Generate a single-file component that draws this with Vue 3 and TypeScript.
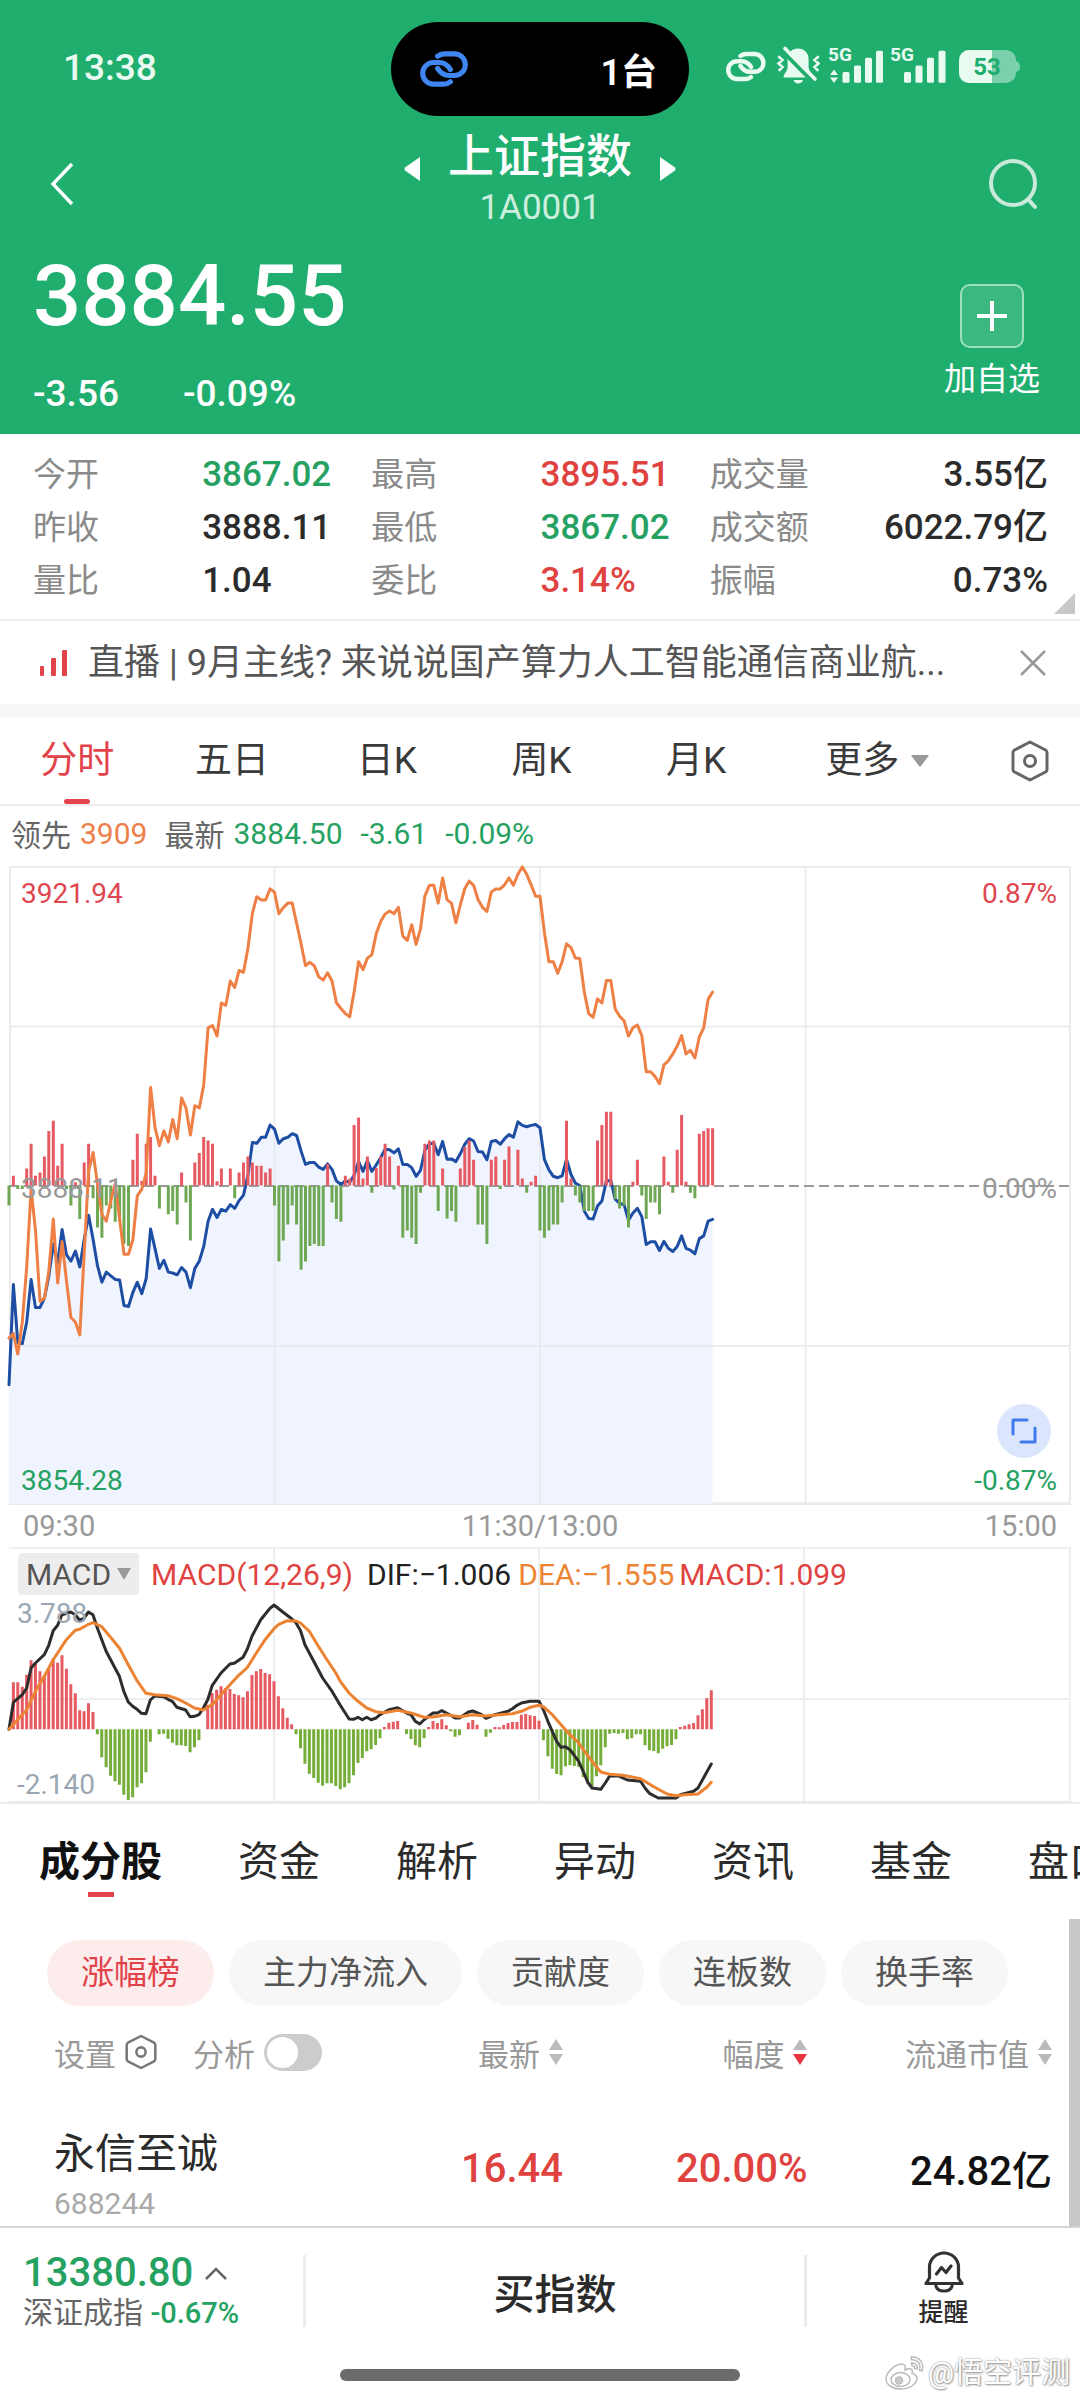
<script setup lang="ts">
import { computed, ref } from 'vue'

type Tone = 'up' | 'down' | 'flat'
interface Stat { label: string; value: string; tone: Tone }
type Point = [number, number]

const stats: Stat[] = [
  { label: '今开', value: '3867.02', tone: 'down' },
  { label: '最高', value: '3895.51', tone: 'up' },
  { label: '成交量', value: '3.55亿', tone: 'flat' },
  { label: '昨收', value: '3888.11', tone: 'flat' },
  { label: '最低', value: '3867.02', tone: 'down' },
  { label: '成交额', value: '6022.79亿', tone: 'flat' },
  { label: '量比', value: '1.04', tone: 'flat' },
  { label: '委比', value: '3.14%', tone: 'up' },
  { label: '振幅', value: '0.73%', tone: 'flat' },
]

const periods = ['分时', '五日', '日K', '周K', '月K']
const period = ref('分时')
const sections = ['成分股', '资金', '解析', '异动', '资讯', '基金', '盘口']
const section = ref('成分股')
const rankings = ['涨幅榜', '主力净流入', '贡献度', '连板数', '换手率']
const ranking = ref('涨幅榜')
const analysis = ref(false)
const columns = [
  { label: '最新', sorted: false },
  { label: '幅度', sorted: true },
  { label: '流通市值', sorted: false },
]
const stocks = [{ name: '永信至诚', code: '688244', last: '16.44', change: '20.00%', cap: '24.82亿' }]

/* One sample per minute, 240 minutes in a session. */
const STEP = 1062 / 240
const px = (i: number) => i * STEP

/* Intraday panel: levels run from 165 (top) to 1557 (bottom), flat at 862. */
const leading = [
  1195, 1185, 1230, 1160, 1040, 870, 960, 1115, 1108, 1050, 935, 1075, 985, 1070, 1150, 1160, 1188, 1010, 830, 790,
  860, 925, 940, 895, 858, 935, 1012, 1012, 980, 885, 870, 835, 648, 735, 775, 743, 767, 718, 760, 671,
  693, 752, 688, 693, 643, 518, 513, 536, 464, 469, 416, 430, 393, 397, 345, 268, 232, 239, 239, 215,
  222, 269, 256, 246, 246, 290, 335, 382, 375, 383, 407, 414, 398, 416, 463, 476, 487, 494, 440, 374,
  391, 366, 359, 312, 286, 270, 263, 269, 255, 318, 327, 293, 336, 302, 230, 207, 207, 246, 191, 239,
  246, 289, 250, 214, 198, 207, 238, 255, 264, 222, 215, 215, 206, 191, 207, 183, 167, 183, 206, 231,
  231, 310, 374, 374, 399, 374, 335, 343, 366, 367, 440, 487, 495, 455, 464, 415, 415, 477, 493, 503,
  536, 518, 512, 535, 614, 614, 624, 640, 599, 590, 575, 558, 535, 575, 567, 584, 538, 518, 456, 440,
]
const latest = [
  1297, 1078, 1205, 1207, 1160, 1067, 1128, 1128, 1108, 1060, 990, 1030, 958, 1013, 1027, 1005, 1040, 980, 927, 980,
  1037, 1073, 1051, 1059, 1067, 1068, 1124, 1126, 1095, 1073, 1098, 1065, 957, 1000, 1043, 1025, 1051, 1053, 1057, 1041,
  1051, 1085, 1043, 1027, 995, 940, 914, 932, 914, 918, 904, 912, 895, 883, 840, 768, 770, 757, 757, 730,
  739, 770, 760, 757, 749, 753, 787, 816, 812, 812, 822, 827, 815, 827, 852, 860, 852, 855, 840, 810,
  831, 808, 831, 817, 801, 783, 784, 791, 782, 816, 816, 823, 842, 829, 785, 771, 770, 795, 766, 805,
  804, 810, 793, 772, 760, 765, 788, 789, 806, 766, 764, 772, 760, 751, 757, 723, 731, 734, 731, 729,
  736, 805, 828, 842, 845, 841, 805, 838, 857, 862, 918, 934, 935, 907, 896, 852, 851, 892, 901, 904,
  938, 922, 912, 930, 991, 985, 985, 1004, 984, 999, 1006, 995, 972, 999, 1003, 1011, 978, 972, 940, 936,
]
const flow = [
  906, 841, 870, 870, 825, 771, 841, 834, 799, 743, 721, 819, 771, 870, 906, 855, 935, 812, 771, 890,
  954, 976, 906, 912, 941, 940, 990, 994, 806, 749, 852, 771, 756, 841, 912, 862, 925, 918, 947, 834,
  899, 982, 812, 791, 756, 764, 771, 853, 825, 862, 825, 890, 834, 812, 799, 812, 819, 819, 834, 825,
  906, 1028, 982, 947, 906, 947, 1046, 1028, 994, 990, 994, 994, 815, 899, 935, 941, 841, 847, 730, 714,
  847, 799, 878, 824, 799, 771, 799, 871, 819, 976, 960, 976, 990, 878, 771, 764, 764, 918, 825, 934,
  918, 941, 825, 778, 764, 806, 947, 947, 990, 806, 799, 870, 806, 777, 862, 784, 847, 878, 854, 841,
  960, 976, 960, 947, 947, 899, 721, 847, 884, 899, 918, 918, 918, 764, 730, 701, 701, 892, 912, 906,
  954, 854, 806, 884, 935, 899, 899, 925, 799, 854, 878, 784, 708, 854, 878, 890, 749, 743, 737, 737,
]
const py = (v: number) => ((v - 165) / 1392) * 638
const toPath = (pts: Point[]) => 'M' + pts.map(([x, y]) => `${x.toFixed(1)} ${y.toFixed(1)}`).join('L')

const leadingPath = toPath(leading.map((v, i): Point => [px(i), py(v)]))
const latestPath = toPath(latest.map((v, i): Point => [px(i), py(v)]))
const latestArea = `${latestPath}L${px(159)} 638L0 638Z`

const bars = (values: number[], zero: number, map: (v: number) => number, up: boolean) =>
  values
    .map((v, i) => (v !== zero && v < zero === up ? `M${px(i).toFixed(1)} ${map(zero).toFixed(1)}V${map(v).toFixed(1)}` : ''))
    .join('')
const flowUp = bars(flow, 862, py, true)
const flowDown = bars(flow, 862, py, false)

/* MACD panel: levels run from 143 (top) to 898 (bottom), zero at 684. */
const histogram = [
  684, 543, 543, 556, 520, 477, 487, 510, 521, 500, 471, 484, 462, 502, 549, 576, 627, 630, 606, 632,
  699, 768, 798, 823, 840, 850, 880, 896, 888, 858, 846, 813, 721, 684, 699, 697, 712, 724, 732, 732,
  734, 753, 738, 717, 684, 610, 575, 565, 555, 560, 563, 578, 582, 588, 570, 521, 510, 503, 515, 519,
  540, 585, 621, 649, 669, 699, 741, 787, 817, 830, 844, 853, 846, 846, 854, 864, 858, 846, 822, 785,
  770, 750, 744, 731, 711, 677, 664, 661, 659, 684, 698, 713, 732, 738, 711, 677, 659, 665, 654, 672,
  690, 706, 702, 684, 664, 656, 670, 684, 706, 694, 677, 678, 671, 665, 662, 662, 640, 638, 642, 644,
  658, 717, 765, 802, 818, 822, 795, 792, 794, 797, 828, 840, 855, 825, 792, 738, 697, 695, 697, 695,
  714, 711, 699, 699, 732, 747, 749, 756, 742, 735, 731, 714, 677, 673, 669, 665, 642, 624, 591, 567,
]
const dif: Point[] = [
  [0, 684], [1, 603], [3, 580], [4, 560], [5, 500], [6, 485], [8, 460], [9, 432], [10, 388], [11, 372], [12, 340],
  [14, 332], [15, 340], [16, 357], [17, 350], [18, 332], [19, 340], [20, 380], [22, 450], [24, 500], [25, 525],
  [26, 570], [27, 602], [28, 615], [29, 624], [30, 636], [31, 637], [32, 596], [33, 584], [35, 586], [36, 594],
  [37, 600], [38, 618], [40, 626], [41, 646], [42, 645], [43, 640], [44, 620], [45, 595], [46, 553], [48, 515],
  [50, 488], [51, 486], [53, 468], [54, 442], [55, 405], [57, 355], [59, 322], [60, 311], [62, 332], [64, 352],
  [65, 365], [66, 388], [67, 430], [69, 480], [71, 530], [73, 567], [75, 612], [77, 653], [78, 654], [79, 648],
  [80, 655], [81, 648], [82, 655], [83, 651], [84, 640], [86, 625], [88, 619], [90, 635], [91, 640], [92, 660],
  [93, 668], [94, 655], [96, 635], [97, 635], [98, 628], [100, 642], [101, 650], [102, 650], [104, 632], [105, 629],
  [107, 640], [108, 651], [110, 640], [113, 630], [114, 622], [115, 612], [116, 605], [118, 600], [120, 600],
  [121, 625], [122, 660], [123, 690], [124, 720], [125, 738], [126, 736], [127, 745], [129, 780], [130, 810],
  [131, 842], [132, 860], [134, 864], [135, 845], [136, 824], [138, 824], [140, 836], [143, 840], [144, 860],
  [145, 876], [147, 890], [151, 890], [152, 880], [155, 870], [156, 860], [158, 812], [159, 788],
]
const dea: Point[] = [
  [0, 684], [2, 655], [4, 625], [6, 570], [8, 525], [10, 475], [12, 435], [13, 415], [15, 387], [16, 384], [18, 369],
  [19, 364], [21, 376], [23, 408], [25, 440], [27, 490], [29, 538], [31, 576], [33, 580], [36, 583], [38, 592],
  [40, 605], [42, 620], [44, 626], [46, 610], [48, 580], [50, 550], [52, 522], [54, 498], [56, 455], [58, 415],
  [60, 382], [61, 370], [63, 358], [65, 359], [66, 365], [68, 390], [70, 434], [72, 475], [74, 515], [75, 540],
  [77, 575], [79, 600], [81, 620], [83, 631], [85, 634], [88, 627], [91, 635], [94, 648], [96, 647], [99, 640],
  [102, 646], [105, 640], [108, 644], [111, 640], [114, 637], [116, 630], [118, 618], [120, 612], [121, 616],
  [123, 640], [125, 670], [127, 700], [129, 725], [130, 745], [132, 780], [134, 812], [136, 819], [139, 822],
  [143, 832], [146, 856], [149, 878], [151, 883], [153, 880], [156, 878], [158, 858], [159, 843],
]
const my = (v: number) => (v - 143) / 3
const difPath = toPath(dif.map(([i, v]): Point => [px(i), my(v)]))
const deaPath = toPath(dea.map(([i, v]): Point => [px(i), my(v)]))
const macdUp = bars(histogram, 684, my, true)
const macdDown = bars(histogram, 684, my, false)

const analysisLabel = computed(() => (analysis.value ? '关闭分析' : '打开分析'))
</script>

<template>
  <div class="page">
    <header class="hero">
      <div class="status">
        <span class="clock">13:38</span>
        <div class="island">
          <svg width="54" height="40" viewBox="0 5 43.6 33" fill="none" stroke="#3f86f0" stroke-width="4.2" stroke-linecap="round">
            <path d="M16.5 11Q19 9 22 9H30.5A8.9 8.9 0 0 1 30.5 26.8H26Q20 26.8 16.5 21" />
            <path d="M27.1 32Q24.6 34 21.6 34H13.1A8.9 8.9 0 0 1 13.1 16.2H17.6Q23.6 16.2 27.1 22" />
          </svg>
          <span>1台</span>
        </div>
        <svg class="signals" width="300" height="42" viewBox="0 0 300 42" fill="#e9faf1">
          <g fill="none" stroke="#e9faf1" stroke-width="4.4" stroke-linecap="round">
            <path d="M16.5 11Q19 9 22 9H30.5A8.9 8.9 0 0 1 30.5 26.8H26Q20 26.8 16.5 21" />
            <path d="M27.1 32Q24.6 34 21.6 34H13.1A8.9 8.9 0 0 1 13.1 16.2H17.6Q23.6 16.2 27.1 22" />
          </g>
          <path d="M74 3.6C80 3.6 84.6 8 84.6 14V22C84.6 26 88.5 29 88.5 32.6H59.5C59.5 29 63.6 26 63.6 22V14C63.6 8 68 3.6 74 3.6ZM69.5 35H79C78 39.5 70.5 39.5 69.5 35Z" />
          <path d="M58 5.5L89 37" stroke="#20ae6f" stroke-width="4" />
          <path d="M61 3.5L91 34" stroke="#e9faf1" stroke-width="3.6" stroke-linecap="round" />
          <path d="M55 12L58.5 15L54.5 18.5L58.5 22L55.5 25M94 12L90.5 15L94.5 18.5L90.5 22L93.5 25" fill="none" stroke="#e9faf1" stroke-width="2.6" stroke-linecap="round" />
          <text x="104" y="16" class="net">5G</text>
          <path d="M106 30L110 24.5L114 30ZM106 32.5L110 38L114 32.5Z" />
          <rect x="118.5" y="27" width="7" height="10.7" rx="1.5" /><rect x="130" y="20.5" width="7" height="17.2" rx="1.5" />
          <rect x="141" y="12.7" width="7" height="25" rx="1.5" /><rect x="152" y="5.7" width="7" height="32" rx="1.5" />
          <text x="166" y="16" class="net">5G</text>
          <rect x="180" y="27" width="7" height="10.7" rx="1.5" /><rect x="191.5" y="20.5" width="7" height="17.2" rx="1.5" />
          <rect x="203" y="12.7" width="7" height="25" rx="1.5" /><rect x="214.5" y="5.7" width="7" height="32" rx="1.5" />
          <rect x="235" y="5" width="57" height="33" rx="10" opacity=".45" />
          <path d="M292 16Q296 17 296 21.5Q296 26 292 27Z" opacity=".45" />
          <path d="M245 5H268V38H245A10 10 0 0 1 235 28V15A10 10 0 0 1 245 5Z" />
          <text x="263" y="30" text-anchor="middle" class="level">53</text>
        </svg>
      </div>

      <nav class="nav">
        <button class="icon-btn" aria-label="返回">
          <svg width="24" height="44" viewBox="0 0 24 44" fill="none" stroke="#fff" stroke-width="3.4"><path d="M22 2L3 22L22 42" /></svg>
        </button>
        <div class="title">
          <button class="icon-btn step" aria-label="上一个">
            <svg width="16" height="24" viewBox="0 0 16 24"><path d="M16 0V24L1 13.5Q0 12 1 10.5Z" fill="#fff" /></svg>
          </button>
          <div class="names"><h1>上证指数</h1><p>1A0001</p></div>
          <button class="icon-btn step" aria-label="下一个">
            <svg width="16" height="24" viewBox="0 0 16 24"><path d="M0 0V24L15 13.5Q16 12 15 10.5Z" fill="#fff" /></svg>
          </button>
        </div>
        <button class="icon-btn right" aria-label="搜索">
          <svg width="50" height="52" viewBox="0 0 50 52" fill="none" stroke="#c9ead9" stroke-width="4" stroke-linecap="round"><circle cx="25" cy="25" r="22" /><path d="M40 41L47 49" /></svg>
        </button>
      </nav>

      <div class="quote">
        <div>
          <p class="price">3884.55</p>
          <p class="delta"><span>-3.56</span><span>-0.09%</span></p>
        </div>
        <button class="add">
          <svg width="64" height="64" viewBox="0 0 64 64" fill="none">
            <rect x="1" y="1" width="62" height="62" rx="9" fill="#fff" fill-opacity=".12" stroke="#9edfc0" stroke-width="2" />
            <path d="M32 17V47M17 32H47" stroke="#fff" stroke-width="4" />
          </svg>
          <span>加自选</span>
        </button>
      </div>
    </header>

    <dl class="stats">
      <div v-for="s in stats" :key="s.label" class="stat">
        <dt>{{ s.label }}</dt>
        <dd :class="s.tone">{{ s.value }}</dd>
      </div>
      <svg class="corner" width="21" height="21" viewBox="0 0 21 21"><path d="M21 0V21H0Z" fill="#c8c8c8" /></svg>
    </dl>

    <div class="notice">
      <svg width="28" height="26" viewBox="0 0 28 26" fill="#e2424a"><rect y="16" width="4" height="10" rx="1" /><rect x="11" y="8" width="5" height="18" rx="1" /><rect x="22" width="5" height="26" rx="1" /></svg>
      <a href="#live">直播 | 9月主线? 来说说国产算力人工智能通信商业航...</a>
      <button class="icon-btn" aria-label="关闭">
        <svg width="26" height="26" viewBox="0 0 26 26" stroke="#999" stroke-width="2.5"><path d="M1 1L25 25M25 1L1 25" /></svg>
      </button>
    </div>

    <nav class="periods">
      <button v-for="p in periods" :key="p" :class="{ active: p === period }" @click="period = p">{{ p }}</button>
      <button class="more">更多<svg width="18" height="12" viewBox="0 0 18 12"><path d="M1 0H17Q18 0 17.5 1L10 11Q9 12 8 11L.5 1Q0 0 1 0Z" fill="#999" /></svg></button>
      <button class="gear" aria-label="图表设置">
        <svg width="38" height="42" viewBox="0 0 38 42" fill="none" stroke="#666" stroke-width="3"><path d="M19 2L34.5 10Q36 11 36 12.5V29.5Q36 31 34.5 32L19 40L3.5 32Q2 31 2 29.5V12.5Q2 11 3.5 10Z" stroke-linejoin="round" /><circle cx="19" cy="21" r="5.5" /></svg>
      </button>
    </nav>

    <p class="legend">
      <span>领先</span><span class="lead">3909</span><span class="newest">最新</span><span class="down">3884.50</span>
      <span class="down wide">-3.61</span><span class="down wide">-0.09%</span>
    </p>

    <section class="charts">
      <div class="intraday">
        <svg class="plot" viewBox="0 0 1062 638" preserveAspectRatio="none" role="img" aria-label="分时走势">
          <path :d="latestArea" fill="#f0f4fe" />
          <path d="M265.5 0V638M531 0V638M796.5 0V638M0 160.5H1062M0 480H1062" class="grid" />
          <path d="M0 320H1062" class="zero" />
          <path :d="latestPath" class="line latest" />
          <path :d="flowUp" class="bar red" />
          <path :d="flowDown" class="bar green" />
          <path :d="leadingPath" class="line leading" />
        </svg>
        <span class="tag tl up">3921.94</span>
        <span class="tag tr up">0.87%</span>
        <span class="tag ml">3888.11</span>
        <span class="tag mr">0.00%</span>
        <span class="tag bl down">3854.28</span>
        <span class="tag br down">-0.87%</span>
        <button class="expand" aria-label="全屏">
          <svg width="26" height="26" viewBox="0 0 26 26" fill="none" stroke="#3f7bea" stroke-width="3" stroke-linecap="round" stroke-linejoin="round"><path d="M2 16V2H16M24 10V24H10" /></svg>
        </button>
      </div>
      <div class="times"><span>09:30</span><span>11:30/13:00</span><span>15:00</span></div>
      <div class="macd">
        <svg class="plot" viewBox="0 0 1062 252" preserveAspectRatio="none" role="img" aria-label="MACD">
          <path d="M265.5 0V252M531 0V252M796.5 0V252M0 150H1062" class="grid" />
          <path :d="macdUp" class="bar red" />
          <path :d="macdDown" class="bar lime" />
          <path :d="difPath" class="line dif" />
          <path :d="deaPath" class="line dea" />
        </svg>
        <div class="indicator">
          <button>MACD<svg width="14" height="12" viewBox="0 0 14 12"><path d="M0 0H14L7 12Z" fill="#999" /></svg></button>
          <span class="up params">MACD(12,26,9)</span><span class="difval">DIF:−1.006</span><span class="deaval">DEA:−1.555</span><span class="up">MACD:1.099</span>
        </div>
        <span class="scale high">3.788</span>
        <span class="scale low">-2.140</span>
      </div>
    </section>

    <nav class="sections">
      <button v-for="s in sections" :key="s" :class="{ active: s === section }" @click="section = s">{{ s }}</button>
    </nav>

    <main class="list">
      <div class="chips">
        <button v-for="r in rankings" :key="r" :class="{ active: r === ranking }" @click="ranking = r">{{ r }}</button>
      </div>
      <table>
        <thead>
          <tr>
            <th>
              <div class="tools">
                <button>设置<svg width="32" height="36" viewBox="0 0 38 42" fill="none" stroke="#777" stroke-width="3"><path d="M19 2L34.5 10Q36 11 36 12.5V29.5Q36 31 34.5 32L19 40L3.5 32Q2 31 2 29.5V12.5Q2 11 3.5 10Z" stroke-linejoin="round" /><circle cx="19" cy="21" r="5.5" /></svg></button>
                <label>分析<input v-model="analysis" type="checkbox" :aria-label="analysisLabel" /></label>
              </div>
            </th>
            <th v-for="c in columns" :key="c.label">
              <button class="sort">{{ c.label }}<svg width="14" height="26" viewBox="0 0 14 26"><path d="M7 0L14 11H0Z" fill="#bbb" /><path d="M7 26L14 15H0Z" :fill="c.sorted ? '#e8343f' : '#bbb'" /></svg></button>
            </th>
          </tr>
        </thead>
        <tbody>
          <tr v-for="s in stocks" :key="s.code">
            <td><div class="name">{{ s.name }}</div><div class="code">{{ s.code }}</div></td>
            <td class="up">{{ s.last }}</td>
            <td class="up">{{ s.change }}</td>
            <td>{{ s.cap }}</td>
          </tr>
        </tbody>
      </table>
      <span class="scrollbar"></span>
    </main>

    <footer>
      <div class="dock">
        <button class="index">
          <span class="index-top down">13380.80<svg width="22" height="13" viewBox="0 0 22 13" fill="none" stroke="#666" stroke-width="2.5"><path d="M1 12L11 2L21 12" /></svg></span>
          <span class="index-sub">深证成指 <b>-0.67%</b></span>
        </button>
        <button class="buy">买指数</button>
        <button class="alert">
          <svg width="40" height="42" viewBox="0 0 40 42" fill="none" stroke="#333" stroke-width="3.2" stroke-linejoin="round" stroke-linecap="round">
            <path d="M2 32.5H38L34.5 27V16A14.5 14 0 0 0 5.5 16V27ZM12 35Q13 40 20 40Q27 40 28 35M12.5 23L17.5 16.5L22 21.5L27 15" />
          </svg>
          <span>提醒</span>
        </button>
      </div>
      <div class="home"></div>
      <div class="mark">
        <svg width="40" height="34" viewBox="0 0 40 34" fill="#fff" stroke="#bbb" stroke-width="1.5">
          <path d="M16 8C9 9 1 17 1 23C1 29 8 33 16 33C25 33 32 28 32 22C32 19 29 18 27 17C28 14 27 11 20 14C21 11 20 7.5 16 8Z" />
          <ellipse cx="15.5" cy="23.5" rx="9.5" ry="7" /><circle cx="14" cy="24.5" r="3.5" fill="#ccc" />
          <path d="M26 1C34 0 40 7 37 15L34.5 14C36.5 8 32 3 26.5 3.8ZM26.5 7C30 6.5 33 9.5 32 13L29.5 12.5C30 10.5 29 9.5 27 9.7Z" />
        </svg>
        <span>@悟空评测</span>
      </div>
    </footer>
  </div>
</template>

<style>
body { margin: 0; background: #fff; }
</style>

<style scoped>
.page { position: relative; overflow: hidden; font-family: Roboto, "Noto Sans CJK SC", sans-serif; color: #2b2b2b; background: #fff; }
button { border: 0; padding: 0; margin: 0; background: none; font: inherit; color: inherit; white-space: nowrap; cursor: pointer; }
svg { display: block; flex: none; }
p, h1, dl, dd { margin: 0; }
.up { color: #e0433f; }
.down { color: #25a162; }
.flat { color: #2b2b2b; }

.hero { padding-bottom: 16px; background: #20ae6f; color: #fff; }
.status { display: grid; grid-template-columns: 1fr 298px 1fr; align-items: center; padding: 22px 56px 0; height: 94px; }
.clock { padding: 0 0 2px 7px; font-size: 37px; line-height: 42px; font-weight: 500; color: #e9faf1; }
.island { display: flex; align-items: center; justify-content: space-between; height: 94px; box-sizing: border-box; padding: 0 32px 0 26px; border-radius: 47px; background: #000; font-size: 36px; font-weight: 600; }
.signals { justify-self: end; padding-bottom: 6px; }
.net { font-size: 19px; font-weight: 700; }
.level { font-size: 24px; font-weight: 700; fill: #20ae6f; }

.nav { display: grid; grid-template-columns: 1fr auto 1fr; align-items: center; padding: 11px 42px 0 50px; height: 114px; }
.icon-btn.right { justify-self: end; }
.icon-btn:first-child { justify-self: start; }
.title { display: flex; align-items: flex-start; gap: 28px; height: 114px; margin-left: -8px; }
.step { padding-top: 30px; }
.names { text-align: center; }
h1 { font-size: 46px; line-height: 58px; font-weight: 500; }
.names p { font-size: 35px; line-height: 46px; color: #cdeedd; }

.quote { display: flex; justify-content: space-between; padding: 5px 40px 0 33px; }
.price { font-size: 85px; line-height: 100px; font-weight: 500; }
.delta { display: flex; gap: 64px; margin-top: 24px; font-size: 37px; line-height: 48px; font-weight: 500; }
.add { display: flex; flex-direction: column; align-items: center; align-self: flex-start; gap: 11px; margin-top: 38px; font-size: 32px; line-height: 40px; }

.stats { position: relative; display: grid; grid-template-columns: repeat(3, 1fr); padding: 14px 32px 12px 33px; border-bottom: 2px solid #ececec; }
.stat { display: grid; grid-template-columns: 1fr 1fr; font-size: 33px; line-height: 53px; white-space: nowrap; }
.stat dt { color: #8a8a8a; }
.stat dd { font-size: 35px; font-weight: 500; }
.stat:nth-child(3n) { grid-template-columns: auto 1fr; }
.stat:nth-child(3n) dd { text-align: right; }
.corner { position: absolute; right: 5px; bottom: 5px; }

.notice { display: flex; align-items: center; height: 83px; padding: 0 34px 0 40px; border-bottom: 13px solid #f7f7f7; }
.notice a { flex: 1; margin-left: 20px; white-space: nowrap; font-size: 36px; line-height: 50px; color: #555; text-decoration: none; }

.periods { display: grid; grid-template-columns: repeat(5, 155fr) 208fr 97fr; align-items: center; justify-items: center; height: 87px; padding-right: 2px; border-bottom: 2px solid #ececec; font-size: 37px; color: #3a3a3a; }
.periods button { position: relative; line-height: 86px; }
.periods .active { color: #e2424a; }
.periods .active::after { content: ""; position: absolute; left: 50%; bottom: 0; width: 26px; height: 5px; margin-left: -13px; border-radius: 3px; background: #e2424a; }
.periods .more { display: flex; align-items: center; gap: 12px; }

.legend { display: flex; align-items: center; gap: 9px; height: 54px; padding: 0 0 6px 11px; font-size: 30px; color: #666; }
.legend .lead { color: #ec7f4a; }
.legend .newest { margin-left: 8px; }
.legend .wide { margin-left: 9px; }

.charts { padding: 0 9px; font-size: 29px; }
.intraday { position: relative; border-bottom: 1px solid #e6e8ec; box-shadow: inset 0 0 0 2px #ececec; }
.plot { width: 100%; overflow: visible; }
.intraday .plot { height: 638px; }
.macd .plot { height: 252px; }
.plot path { vector-effect: non-scaling-stroke; }
.grid { stroke: #e4e7ec; stroke-width: 2px; fill: none; opacity: .7; }
.zero { stroke: #999; stroke-width: 2px; stroke-dasharray: 10 5; fill: none; }
.line { fill: none; stroke-width: 3px; stroke-linejoin: round; stroke-linecap: round; }
.latest { stroke: #1d4ea3; }
.leading { stroke: #ee7f45; }
.bar { fill: none; stroke-width: 3px; }
.red { stroke: #e65a62; }
.green { stroke: #6fa855; }
.lime { stroke: #74ad38; }
.dif { stroke: #2d2d2d; }
.dea { stroke: #ec8333; }
.tag { position: absolute; font-size: 28px; line-height: 36px; color: #999; }
.tag.up { color: #e0464f; }
.tag.down { color: #25a162; }
.tl { left: 12px; top: 10px; }
.tr { right: 14px; top: 10px; }
.ml { left: 12px; top: 305px; }
.mr { right: 14px; top: 305px; }
.bl { left: 12px; bottom: 5px; }
.br { right: 14px; bottom: 5px; }
.expand { position: absolute; right: 20px; bottom: 46px; display: grid; place-items: center; width: 54px; height: 54px; border-radius: 50%; background: #dbe6fd; }
.times { display: grid; grid-template-columns: 1fr auto 1fr; padding: 0 14px; line-height: 42px; color: #999; }
.times span:last-child { text-align: right; }
.macd { position: relative; border-top: 2px solid #efefef; border-right: 2px solid #efefef; border-bottom: 1px solid #e9e9e9; }
.indicator { position: absolute; left: 9px; top: 4px; display: flex; align-items: center; height: 42px; font-size: 30px; white-space: nowrap; }
.indicator button { display: flex; align-items: center; gap: 6px; height: 42px; padding: 0 8px; border-radius: 4px; background: #ededed; color: #555; }
.params { margin: 0 14px 0 12px; }
.difval { margin-right: 7px; color: #222; }
.deaval { margin-right: 5px; color: #ec8333; }
.scale { position: absolute; left: 8px; font-size: 28px; line-height: 36px; color: #9aa7b3; }
.high { top: 47px; }
.low { bottom: -2px; }

.sections { display: flex; gap: 76px; padding: 28px 0 21px 39px; border-top: 2px solid #ececec; overflow: hidden; font-size: 41px; line-height: 60px; }
.sections button { position: relative; flex: none; padding-bottom: 6px; }
.sections .active { font-weight: 700; color: #111; }
.sections .active::after { content: ""; position: absolute; left: 50%; bottom: 1px; width: 26px; height: 5px; margin-left: -13px; background: #e2424a; }

.list { position: relative; padding-top: 21px; }
.chips { display: flex; gap: 15px; padding-left: 47px; font-size: 33px; line-height: 66px; color: #555; }
.chips button { padding: 0 34px; border-radius: 33px; background: #f7f7f7; }
.chips .active { background: #fdecec; color: #e2424a; }
table { width: calc(100% - 82px); margin: 0 28px 0 54px; table-layout: fixed; border-collapse: collapse; }
th { height: 92px; padding: 0 0 12px; font-size: 31px; font-weight: 400; color: #999; }
th:first-child { width: 27%; }
th:nth-child(2) { width: 24%; }
.tools { display: flex; gap: 36px; }
.tools button, .tools label, .sort { display: flex; align-items: center; gap: 9px; white-space: nowrap; }
.sort { margin-left: auto; }
input[type="checkbox"] { appearance: none; position: relative; width: 58px; height: 37px; margin: 0; border-radius: 19px; background: #ccc; }
input[type="checkbox"]::after { content: ""; position: absolute; left: 3px; top: 3px; width: 31px; height: 31px; border-radius: 50%; background: #fff; }
input[type="checkbox"]:checked::after { left: 24px; }
td { height: 116px; padding: 0; text-align: right; font-size: 40px; font-weight: 500; white-space: nowrap; }
td:first-child { text-align: left; font-weight: 400; }
td:last-child { color: #111; }
.name { margin-top: 16px; font-size: 41px; line-height: 56px; }
.code { font-size: 30px; line-height: 44px; color: #aaa; }
.scrollbar { position: absolute; right: 0; top: 0; bottom: 0; width: 11px; background: #c8c8c8; }

footer { position: relative; padding-bottom: 18px; border-top: 2px solid #d5d5d5; }
.dock { display: grid; grid-template-columns: 303fr 504fr 273fr; align-items: center; height: 126px; }
.index { padding-left: 23px; text-align: left; }
.index-top { display: flex; align-items: center; gap: 12px; font-size: 40px; line-height: 44px; font-weight: 500; }
.index-sub { display: block; font-size: 30px; line-height: 36px; color: #666; }
.index-sub b { font-size: 29px; font-weight: 500; color: #25a162; }
.buy { height: 72px; border-left: 3px solid #ececec; border-right: 3px solid #ececec; font-size: 41px; font-weight: 500; }
.alert { display: flex; flex-direction: column; align-items: center; gap: 2px; font-size: 25px; line-height: 36px; font-weight: 500; }
.home { width: 37%; height: 12px; margin: 15px auto 0; border-radius: 6px; background: #6b6b6b; }
.mark { position: absolute; right: 10px; bottom: 6px; display: flex; align-items: center; gap: 3px; font-size: 29px; line-height: 40px; color: #fff; text-shadow: 0 0 2px #888, 1px 1px 2px #999; }
</style>
